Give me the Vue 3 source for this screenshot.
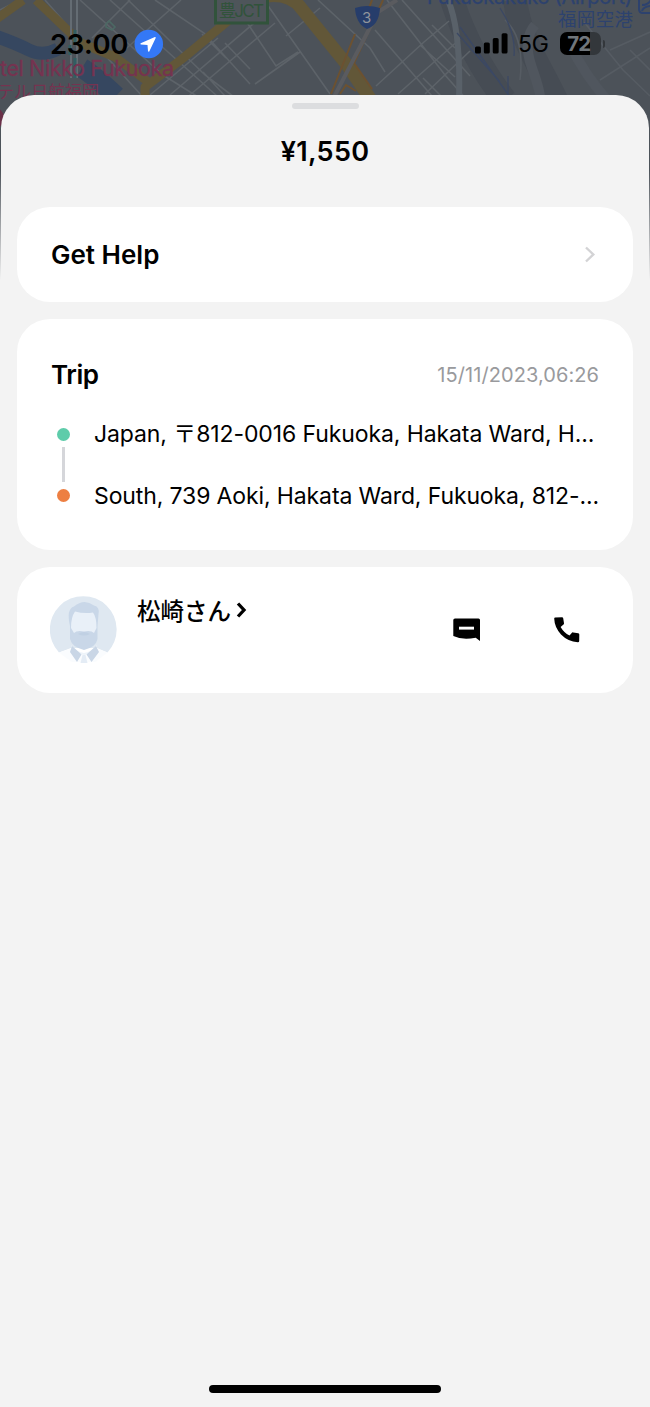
<script setup>
const stops = [
  { kind: 'pickup', text: 'Japan, 〒812-0016 Fukuoka, Hakata Ward, H...' },
  { kind: 'dropoff', text: 'South, 739 Aoki, Hakata Ward, Fukuoka, 812-...' },
]
</script>

<template>
  <main class="screen">
    <svg class="map" width="650" height="280" viewBox="0 0 650 280" aria-hidden="true">
      <defs>
        <linearGradient id="fade" x1="0" y1="0" x2="0" y2="1">
          <stop offset="0.4" stop-color="#f3f3f3" stop-opacity="0" />
          <stop offset="1" stop-color="#f3f3f3" />
        </linearGradient>
      </defs>
      <rect width="650" height="280" fill="#4c5259" />
      <g fill="none" stroke="#464c54" stroke-width="24">
        <path d="M515 0C520 40 540 65 556 100M452 0Q470 55 505 100" />
      </g>
      <g fill="none" stroke="#5d6369" stroke-width="1.6">
        <path d="M0 10L20 0M45 0L80 40L102 52L142 96M80 0L163 75L203 100M110 0L217 96M128 0L205 75L238 100M155 0L204 33L250 84M92 38L130 0M120 54L181 0M150 95L218 38M170 95L260 18M184 100L275 23M203 72L225 96M202 34L226 58M225 43L250 69" />
        <path d="M244 18L276 66L298 52M264 0L330 94M286 36L320 8M255 84L300 52M318 0L370 48L385 72M375 30L432 96M387 0L445 75L467 100M402 0L470 76M376 86L424 42L449 21M398 94L460 39M425 94L470 51M423 78L443 98M420 45L455 77M432 25L455 48" />
        <path d="M505 20Q525 38 520 80M584 22L623 70L650 96M610 50L650 32M600 80L650 48M630 50L650 70" stroke="#565c63" />
        <path d="M106 24L109 21L115 27L112 30L106 27Z" stroke="#4c6964" />
      </g>
      <path d="M448 0Q461 30 459 100" fill="none" stroke="#596169" stroke-width="6" />
      <path d="M535 25Q522 40 532 68T540 100M570 45Q585 75 607 100" fill="none" stroke="#50565e" stroke-width="10" />
      <g fill="none" stroke="#364760" stroke-width="13">
        <path d="M-5 36Q15 43 29 50T58 49" />
        <path d="M82 68Q95 76 116 96" stroke-width="20" />
      </g>
      <path d="M460 27L510 97M457 33L500 82M500 8Q516 32 514 56M508 76V95" fill="none" stroke="#3b4864" stroke-width="1.3" />
      <g fill="none" stroke="#625738" stroke-linejoin="round">
        <path d="M-5 20L23 0M36 0L81 43L115 57L151 84M145 98V87L182 59L229 20L242 9" stroke-width="9" />
        <path d="M266 -4Q290 -7 301 8L348 66L371 100" stroke-width="13" />
      </g>
      <path d="M71 0V78M77 0V78" fill="none" stroke="#646c73" stroke-width="2" />
      <path d="M75 30V44M70 45V55M75 58V78" stroke="#315e62" stroke-width="3" />
      <g fill="none" stroke="#6c5130" stroke-width="2">
        <path d="M372 0L368 11M383 0L354 63L372 89M355 34L331 94M340 94L346 85L356 91" />
      </g>
      <path d="M397 0L378 12L333 99" fill="none" stroke="#5a5b5f" stroke-width="4" />
      <rect x="215.5" y="-3" width="52" height="26" fill="#4e555a" stroke="#31533b" stroke-width="3" />
      <text x="219" y="17" class="junction" textLength="45">豊JCT</text>
      <path d="M355 8Q367 4 380 8Q379 25 367 29Q356 24 355 8Z" fill="#263d6b" />
      <text x="362" y="23" class="route">3</text>
      <text x="0" y="76" class="place" textLength="174">tel Nikko Fukuoka</text>
      <text x="-3" y="98" class="place-jp" textLength="102">テル日航福岡</text>
      <circle cx="-7" cy="118" r="11" fill="#6a3048" />
      <text x="427" y="4" class="airport" textLength="205">Fukuokakuko (Airport)</text>
      <text x="558" y="26" class="airport-jp" textLength="75">福岡空港</text>
      <path d="M655 -3H643Q639 -3 639 1V9Q639 13 643 13H655M642 11Q643 7 650 6M642 5Q648 5 651 0" fill="none" stroke="#2d426e" stroke-width="2" />
      <rect y="96" width="650" height="184" fill="url(#fade)" />
    </svg>

    <header class="status">
      <time class="clock">23:00</time>
      <svg class="location" width="30" height="30" viewBox="0 0 30 30">
        <circle cx="15" cy="15" r="14.5" fill="#3478f6" />
        <path d="M21.2 8L6.8 14.2Q6 15 7 15.5L13.7 16L14.2 22.2Q14.8 23.4 15.5 22.5L22 9Q22.2 7.7 21.2 8Z" fill="#fff" />
      </svg>
      <svg class="signal" width="34" height="21" viewBox="0 0 34 21">
        <rect y="13.5" width="6" height="7.2" rx="1.6" />
        <rect x="9" y="9.5" width="6" height="11.2" rx="1.6" />
        <rect x="18" y="5" width="6" height="15.7" rx="1.6" />
        <rect x="27" y="0" width="6" height="20.7" rx="1.6" />
      </svg>
      <span class="network">5G</span>
      <div class="battery"><span>72</span></div>
      <i class="battery-tip"></i>
    </header>

    <section class="sheet">
      <div class="grabber"></div>
      <h1>¥1,550</h1>

      <div class="card help">
        <h2>Get Help</h2>
        <svg width="12" height="18" viewBox="0 0 12 18">
          <path d="M2 1.5L9.3 8.5L2 15.5" fill="none" stroke="#d3d3d5" stroke-width="2.4" />
        </svg>
      </div>

      <div class="card trip">
        <div class="trip-head">
          <h2>Trip</h2>
          <time>15/11/2023,06:26</time>
        </div>
        <ol class="stops">
          <li v-for="stop in stops" :key="stop.kind" :class="stop.kind">
            <i class="dot"></i><span>{{ stop.text }}</span>
          </li>
        </ol>
      </div>

      <div class="card driver">
        <svg class="avatar" width="68" height="68" viewBox="0 0 68 68">
          <path d="M9 56.500A33.400 33.400 0 1 1 57.500 56.500L47 52H21Z" fill="#dfe8f1" />
          <path d="M9 56.500L20 53L34 57L48 53L57.500 56.500L45 66H22Z" fill="#fafcfe" />
          <path d="M20 30Q16 13 24 10.500Q34 2 44 9.500Q50 11 48.500 18L47.500 30V43Q46 51 34 54Q22 51 20 43Z" fill="#c9d7e8" />
          <path d="M21 32Q21 21 25 15.500Q34 18 43 16.500Q46.500 21 46.500 32L44 37Q41 34 34 35.500Q27 34 24 37Z" fill="#e9f0f8" />
          <path d="M21 49Q27 56 34 57Q41 56 47 49L46 53Q41 58 34 59Q27 58 22 53Z" fill="#eef4fa" />
          <path d="M22 50L31.500 58.500L27 66L20 56ZM46 50L36.500 58.500L41.500 66L49 56Z" fill="#c9d6e6" />
          <path d="M32.500 59H35.500L37.500 67H30.500Z" fill="#e4ecf5" />
          <path d="M28 38Q34 34 40 38Q34 41 28 38Z" fill="#c0d0e3" />
        </svg>
        <div class="name">
          <span>松崎さん</span>
          <svg width="11" height="16" viewBox="0 0 11 16">
            <path d="M2 1.500L8 8L2 14.500" fill="none" stroke="#000" stroke-width="3.300" />
          </svg>
        </div>
        <svg class="chat" width="28" height="24" viewBox="0 0 28 24">
          <path d="M2 .5H25.500Q27 .5 27 2V23L22.700 19.700Q9 22.200 .3 18V2Q.3 .5 2 .5Z" />
          <path d="M6 8.700H21V11.600H6Z" fill="#fff" />
        </svg>
        <svg class="phone" width="26" height="26" viewBox="0 0 26 26">
          <path d="M1.200 .5L8 .3Q9 .3 9.200 1.300L10 6.200Q10.100 7 9.500 7.600L6.600 10Q9.800 15.600 15.500 18.600L17.700 15.900Q18.300 15.200 19.200 15.400L24.300 16.200Q25.300 16.400 25.300 17.400L25.200 24Q25.100 25.300 23.800 25.200Q14 24.700 7 17.500Q.5 10.400 .2 1.600Q.2 .6 1.200 .5Z" />
        </svg>
      </div>

      <div class="home-indicator"></div>
    </section>
  </main>
</template>

<style>
body { margin: 0; background: #f3f3f3; }
</style>

<style scoped>
* { box-sizing: border-box; }
.screen {
  position: relative;
  width: 650px;
  height: 1407px;
  display: flex;
  flex-direction: column;
  overflow: hidden;
  background: #f3f3f3;
  color: #000;
  font-family: Inter, "Noto Sans CJK JP", sans-serif;
}
.map { position: absolute; top: 0; left: 0; }
.junction { font-size: 17px; fill: #31533b; }
.route { font-size: 15px; fill: #8f949c; }
.place { font-size: 21.5px; fill: #763350; stroke: #763350; stroke-width: .3px; }
.place-jp { font-size: 17px; fill: #763350; }
.airport { font-size: 20px; fill: #2d426e; stroke: #2d426e; stroke-width: .3px; }
.airport-jp { font-size: 18.5px; fill: #2d426e; }

.status {
  position: relative;
  height: 95px;
  flex: none;
  display: flex;
  align-items: center;
  padding: 0 45px 8px 50px;
}
.clock { width: 78px; font-size: 27.5px; font-weight: 600; letter-spacing: -.3px; white-space: nowrap; }
.location { margin-left: 6px; }
.signal { margin-left: 311px; }
.network { width: 31px; margin-left: 10px; font-size: 23px; font-weight: 400; letter-spacing: -.3px; white-space: nowrap; }
.battery {
  width: 42px;
  height: 23px;
  margin-left: 11px;
  border-radius: 7px;
  display: flex;
  align-items: center;
  justify-content: center;
  background: linear-gradient(90deg, #000 30px, #33373b 30px);
  color: #70767c;
  font-size: 20.5px;
  font-weight: 700;
  letter-spacing: -.8px;
}
.battery span { margin-left: -3px; }
.battery-tip { width: 2px; height: 8px; margin-left: 2px; border-radius: 0 3px 3px 0; background: #33373b; }

.sheet {
  position: relative;
  flex: 1;
  display: flex;
  flex-direction: column;
  margin: 0 1px;
  padding: 8px 16px 14px;
  border-radius: 33px 33px 0 0;
  background: #f3f3f3;
}
.grabber { width: 67px; height: 6px; border-radius: 3px; background: #dcdddf; align-self: center; }
h1, h2 { margin: 0; font-weight: 600; font-size: 26px; line-height: 32px; white-space: nowrap; }
h1 { margin: 27px 0 39px; text-align: center; font-size: 27px; letter-spacing: .3px; }
.card { background: #fff; border-radius: 33px; margin-bottom: 17px; flex: none; }
.help { height: 95px; padding: 0 37px 0 34px; display: flex; align-items: center; justify-content: space-between; }
.trip { height: 231px; padding: 40px 34px 0; }
.trip-head { display: flex; justify-content: space-between; align-items: center; }
.trip-head h2 { letter-spacing: -.4px; }
.trip-head time { color: #999a9d; font-size: 20px; letter-spacing: .07px; white-space: nowrap; }
.stops { list-style: none; margin: 28px 0 0; padding: 0; display: grid; gap: 30px; }
.stops li { position: relative; height: 31px; display: flex; align-items: center; font-size: 23px; line-height: 28px; letter-spacing: -.12px; white-space: nowrap; }
.pickup span { margin-top: -2px; letter-spacing: -.1px; }
.dot { width: 13px; height: 13px; flex: none; margin: 0 24px 0 6px; border-radius: 50%; background: #5eccaa; }
.dropoff .dot { background: #ed7f42; }
.dropoff::before { content: ""; position: absolute; left: 11px; top: -33px; width: 3px; height: 35px; background: #d5d6da; }
.driver { height: 126px; margin: 0; padding: 0 53px 0 33px; display: flex; align-items: center; }
.name { align-self: flex-start; display: flex; align-items: center; height: 34px; margin: 26px 0 0 19px; font: 500 23.5px "Noto Sans CJK JP", sans-serif; white-space: nowrap; }
.name svg { margin-left: 5px; }
.chat { margin-left: auto; margin-right: 73px; }
.home-indicator { width: 232px; height: 8px; margin-top: auto; align-self: center; border-radius: 4px; background: #000; }
</style>
